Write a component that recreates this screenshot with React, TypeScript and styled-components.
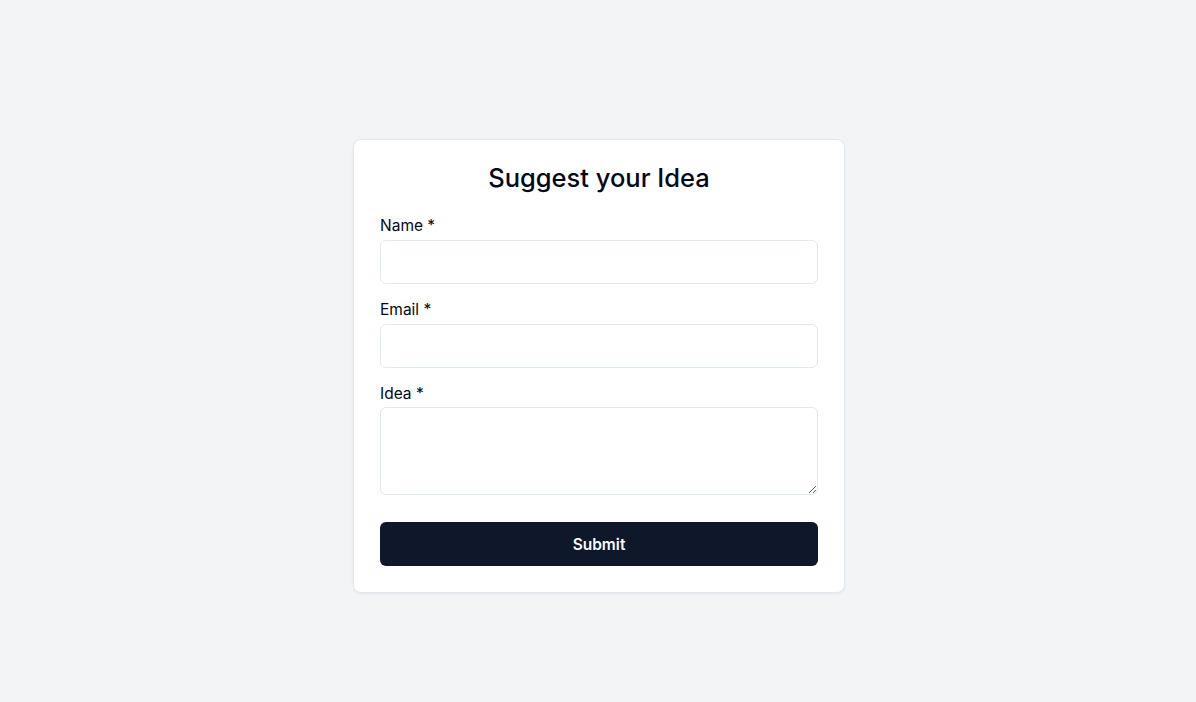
import React from "react";
import styled, { createGlobalStyle } from "styled-components";

const Global = createGlobalStyle`
  * { box-sizing: border-box; }
  html, body { margin: 0; padding: 0; }
  body {
    background: #f3f4f6;
    font-family: Inter, "Noto Sans", sans-serif;
    color: #020817;
  }
`;

const Page = styled.div`
  min-height: 702px;
  display: flex;
  justify-content: center;
  padding-top: 139px;
  padding-left: 2px;
`;

const Card = styled.form`
  width: 492px;
  height: fit-content;
  background: #ffffff;
  border: 1px solid #e2e8f0;
  border-radius: 8px;
  box-shadow: 0 1px 3px rgba(0, 0, 0, 0.06);
  padding: 22px 26px 26px;
  display: flex;
  flex-direction: column;
`;

const Title = styled.h1`
  margin: 0 0 21px;
  font-size: 25.5px;
  line-height: 32px;
  font-weight: 500;
  text-align: center;
  color: #020817;
`;

const Field = styled.div<{ $tight?: boolean }>`
  display: flex;
  flex-direction: column;
  gap: ${(p) => (p.$tight ? "3px" : "4px")};
  margin-bottom: 15px;
`;

const Label = styled.label`
  font-size: 15.5px;
  line-height: 21px;
  font-weight: 400;
  color: #020817;
`;

const Input = styled.input`
  height: 44px;
  width: 100%;
  border: 1px solid #e2e8f0;
  border-radius: 6px;
  background: #fff;
  padding: 0 12px;
  font: inherit;
  font-size: 15px;
  outline: none;
`;

const TextArea = styled.textarea`
  height: 88px;
  width: 100%;
  border: 1px solid #e2e8f0;
  border-radius: 6px;
  background: #fff;
  padding: 8px 12px;
  font: inherit;
  font-size: 15px;
  outline: none;
  resize: vertical;
  display: block;
`;

const Button = styled.button`
  margin-top: 12px;
  height: 44px;
  width: 100%;
  border: none;
  border-radius: 6px;
  background: #0f172a;
  color: #f8fafc;
  font-family: Inter, "Noto Sans", sans-serif;
  font-size: 15.5px;
  font-weight: 600;
  cursor: pointer;
`;

export default function App() {
  return (
    <>
      <Global />
      <Page>
        <Card onSubmit={(e) => e.preventDefault()}>
          <Title>Suggest your Idea</Title>
          <Field>
            <Label htmlFor="name">Name *</Label>
            <Input id="name" type="text" />
          </Field>
          <Field>
            <Label htmlFor="email">Email *</Label>
            <Input id="email" type="email" />
          </Field>
          <Field $tight>
            <Label htmlFor="idea">Idea *</Label>
            <TextArea id="idea" />
          </Field>
          <Button type="submit">Submit</Button>
        </Card>
      </Page>
    </>
  );
}
